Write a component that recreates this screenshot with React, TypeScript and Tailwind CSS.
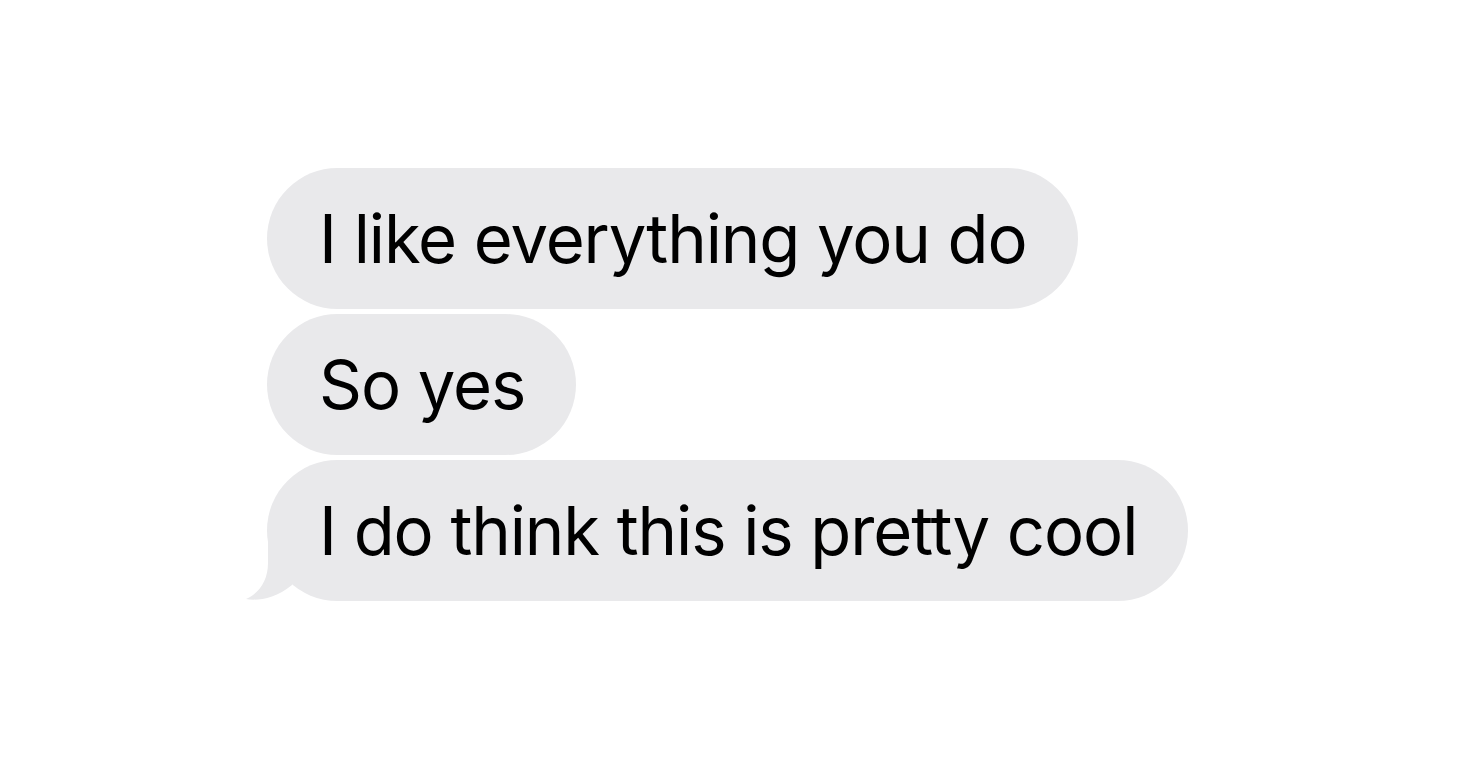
const messages = [
  'I like everything you do',
  'So yes',
  'I do think this is pretty cool',
];

function Tail() {
  return (
    <svg
      className="absolute left-[-22px] bottom-0"
      width="55"
      height="60"
      viewBox="0 0 55 60"
    >
      <path
        d="M23 0 L23 22 C23 40 14 52 1 58 C12 60 30 58 47 44 L47 0 Z"
        fill="#e9e9eb"
      />
    </svg>
  );
}

export default function App() {
  return (
    <div className="w-[1460px] h-[760px] bg-white pt-[168px] pl-[267px] font-['Inter',sans-serif]">
      <div className="flex flex-col items-start gap-[5px]">
        {messages.map((text, i) => (
          <div
            key={i}
            className="relative h-[141px] flex items-center rounded-[71px] bg-[#e9e9eb] pl-[52px] pr-[51px]"
          >
            {i === messages.length - 1 && <Tail />}
            <span className="relative text-[67px] leading-none text-black tracking-[-1.1px] [font-variant-ligatures:none]">
              {text}
            </span>
          </div>
        ))}
      </div>
    </div>
  );
}
